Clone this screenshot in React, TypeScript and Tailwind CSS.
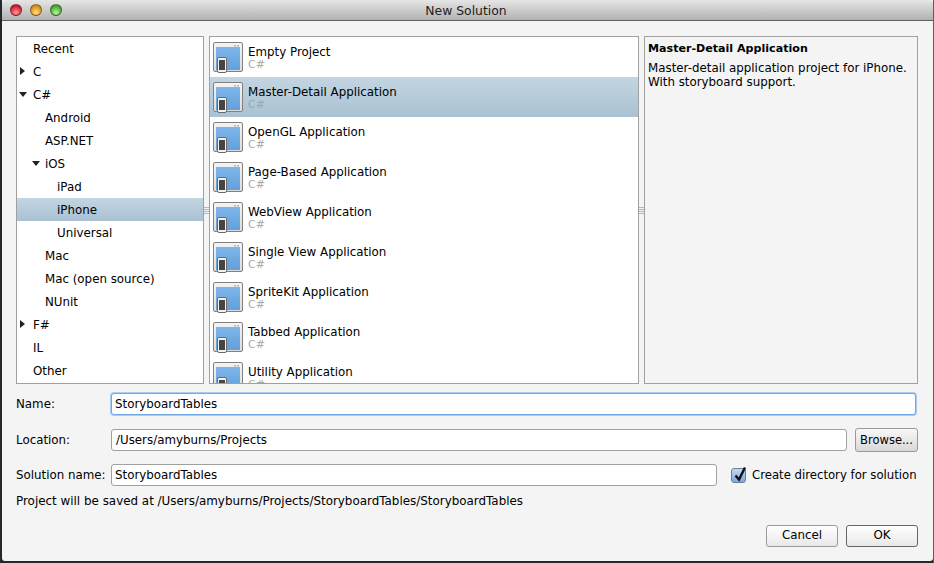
import React from 'react';

const categories = [
  { name: 'Recent', indent: 'pl-[16px]' },
  { name: 'C', indent: 'pl-[16px]', arrow: 'right' },
  { name: 'C#', indent: 'pl-[16px]', arrow: 'down' },
  { name: 'Android', indent: 'pl-[28px]' },
  { name: 'ASP.NET', indent: 'pl-[28px]' },
  { name: 'iOS', indent: 'pl-[28px]', arrow: 'down' },
  { name: 'iPad', indent: 'pl-[40px]' },
  { name: 'iPhone', indent: 'pl-[40px]', selected: true },
  { name: 'Universal', indent: 'pl-[40px]' },
  { name: 'Mac', indent: 'pl-[28px]' },
  { name: 'Mac (open source)', indent: 'pl-[28px]' },
  { name: 'NUnit', indent: 'pl-[28px]' },
  { name: 'F#', indent: 'pl-[16px]', arrow: 'right' },
  { name: 'IL', indent: 'pl-[16px]' },
  { name: 'Other', indent: 'pl-[16px]' },
];

const templates = [
  'Empty Project',
  'Master-Detail Application',
  'OpenGL Application',
  'Page-Based Application',
  'WebView Application',
  'Single View Application',
  'SpriteKit Application',
  'Tabbed Application',
  'Utility Application',
];

function TemplateIcon() {
  return (
    <svg width="32" height="32" viewBox="0 0 32 32" className="shrink-0">
      <defs>
        <linearGradient id="frame" x1="0" y1="0" x2="0" y2="1">
          <stop offset="0" stopColor="#f4f4f4" />
          <stop offset="1" stopColor="#dcdcdc" />
        </linearGradient>
        <linearGradient id="pane" x1="0" y1="0" x2="0" y2="1">
          <stop offset="0" stopColor="#7fb5ea" />
          <stop offset="1" stopColor="#629fdb" />
        </linearGradient>
      </defs>
      <rect x="0.5" y="0.5" width="29" height="29" rx="1.5" fill="url(#frame)" stroke="#808080" />
      <rect x="3" y="5" width="24" height="23" fill="url(#pane)" />
      <rect x="21" y="3" width="2" height="1.5" fill="#b5b5b5" />
      <rect x="24" y="3" width="2" height="1.5" fill="#b5b5b5" />
      <rect x="4.5" y="15.5" width="9" height="15" rx="1.5" fill="#f2f2f2" stroke="#6a6a6a" />
      <rect x="6" y="18" width="6" height="10" fill="#454545" />
    </svg>
  );
}

function Grip() {
  return (
    <div className="flex w-[5px] flex-col justify-center gap-px">
      <div className="h-px bg-[#b8b8b8]" />
      <div className="h-px bg-[#b8b8b8]" />
      <div className="h-px bg-[#b8b8b8]" />
      <div className="h-px bg-[#b8b8b8]" />
    </div>
  );
}

function Light({ color }: { color: string }) {
  return <div className={`h-[12px] w-[12px] rounded-full border border-black/40 ${color}`} />;
}

export default function App() {
  return (
    <div className="h-[563px] w-[934px] overflow-hidden border-r border-[#1f6f9f] bg-[#26292b] pb-[2px] pl-[2px] font-['DejaVu_Sans',sans-serif] text-[11.85px] text-black">
      <div className="relative flex h-full flex-col rounded-b-[3px] bg-[#f4f4f4]">
        <div className="flex h-[21px] shrink-0 items-center gap-[8px] rounded-t-[4px] border-b border-[#5f5f5f] bg-gradient-to-b from-[#e6e6e6] to-[#b2b2b2] pl-[8px]">
          <Light color="bg-[radial-gradient(circle_at_50%_75%,#ff9a9a,#d11c2c_70%)]" />
          <Light color="bg-[radial-gradient(circle_at_50%_75%,#ffe08a,#d98a10_70%)]" />
          <Light color="bg-[radial-gradient(circle_at_50%_75%,#bdf29f,#3fa52f_70%)]" />
          <div className="absolute inset-x-0 top-0 pr-[3px] text-center text-[12.4px] leading-[21px] text-[#222]">New Solution</div>
        </div>

        <div className="flex flex-1 flex-col pl-[14px] pr-[15px] pt-[15px]">
          <div className="flex h-[348px] shrink-0">
            <div className="w-[188px] overflow-hidden border border-[#a0a0a0] bg-white">
              {categories.map((c) => (
                <div
                  key={c.name}
                  className={`relative flex h-[23px] items-center pt-[2px] ${c.indent} ${c.selected ? 'bg-gradient-to-b from-[#c4d5e2] to-[#a9c1d2]' : ''}`}
                >
                  {c.arrow === 'right' && (
                    <div className="absolute left-[3px] top-[7px] h-0 w-0 border-y-[4px] border-l-[5px] border-y-transparent border-l-[#222]" />
                  )}
                  {c.arrow === 'down' && (
                    <div className={`absolute top-[9px] h-0 w-0 border-x-[4px] border-t-[5px] border-x-transparent border-t-[#222] ${c.name === 'iOS' ? 'left-[15px]' : 'left-[2px]'}`} />
                  )}
                  {c.name}
                </div>
              ))}
            </div>
            <Grip />
            <div className="w-[430px] overflow-hidden border border-[#a0a0a0] bg-white">
              {templates.map((t) => {
                const selected = t === 'Master-Detail Application';
                return (
                  <div
                    key={t}
                    className={`flex h-[40px] shrink-0 gap-[3px] pl-[3px] pt-[5px] ${selected ? 'bg-gradient-to-b from-[#c4d5e2] to-[#a9c1d2]' : ''}`}
                  >
                    <TemplateIcon />
                    <div className="pt-px">
                      <div className="leading-[18px]">{t}</div>
                      <div className={`text-[11px] leading-[8px] ${selected ? 'text-[#99a9b6]' : 'text-[#aaaaaa]'}`}>C#</div>
                    </div>
                  </div>
                );
              })}
            </div>
            <Grip />
            <div className="w-[274px] border border-[#a0a0a0] px-[3px] pt-[5px]">
              <div className="text-[11.1px] font-bold leading-[14px]">Master-Detail Application</div>
              <div className="mt-[5px] leading-[14px]">
                Master-detail application project for iPhone.
                <br />
                With storyboard support.
              </div>
            </div>
          </div>

          <div className="mt-[9px] flex items-center">
            <div className="w-[95px] pt-[2px]">Name:</div>
            <div className="mr-[2px] flex h-[22px] flex-1 items-center rounded-[3px] border border-[#6fa8e4] bg-white pl-[3px] pt-[2px] shadow-[0_0_0_1px_#a9cdf2]">
              StoryboardTables
            </div>
          </div>

          <div className="mt-[13px] flex items-center">
            <div className="w-[95px] pt-[2px]">Location:</div>
            <div className="flex h-[22px] w-[736px] items-center rounded-[3px] border border-[#a0a0a0] bg-white pl-[4px] pt-[2px]">/Users/amyburns/Projects</div>
            <div className="ml-[8px] flex h-[24px] w-[63px] items-center justify-center rounded-[3px] border border-[#9a9a9a] bg-gradient-to-b from-[#f8f8f8] to-[#d8d8d8] pt-[2px] text-[11.5px]">Browse...</div>
          </div>

          <div className="mt-[12px] flex items-center">
            <div className="w-[95px] whitespace-nowrap pt-[2px]">Solution name:</div>
            <div className="flex h-[22px] w-[606px] items-center rounded-[3px] border border-[#a0a0a0] bg-white pl-[3px] pt-[2px]">StoryboardTables</div>
            <div className="relative ml-[14px] h-[15px] w-[15px] shrink-0 rounded-[3px] border border-[#6c7f9a] bg-gradient-to-b from-[#c4d8f0] to-[#7fa9dc]">
              <svg width="16" height="18" viewBox="0 0 16 18" className="absolute left-0 top-[-4px]">
                <path d="M3.5 10.5 L7 14.5 L13 2.5" fill="none" stroke="#111" strokeWidth="2.4" />
              </svg>
            </div>
            <div className="ml-[6px] whitespace-nowrap pt-[2px] text-[11.7px]">Create directory for solution</div>
          </div>

          <div className="mt-[8px] text-[11.92px] leading-[14px]">Project will be saved at /Users/amyburns/Projects/StoryboardTables/StoryboardTables</div>

          <div className="mt-[17px] flex justify-end gap-[8px]">
            <div className="flex h-[22px] w-[72px] items-center justify-center rounded-[3px] border border-[#9a9a9a] bg-gradient-to-b from-white to-[#e8e8e8]">Cancel</div>
            <div className="flex h-[22px] w-[72px] items-center justify-center rounded-[3px] border border-[#666] bg-gradient-to-b from-white to-[#e8e8e8]">OK</div>
          </div>
        </div>
      </div>
    </div>
  );
}
